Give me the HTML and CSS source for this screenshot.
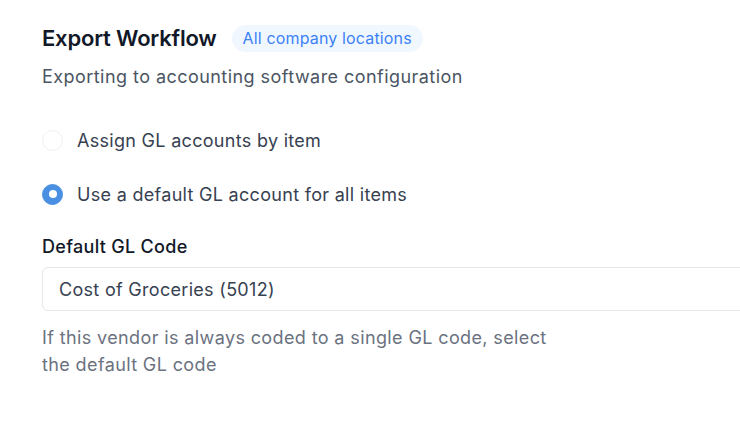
FILE: index.html
```html
<!DOCTYPE html>
<html>
<head>
<meta charset="utf-8">
<link rel="stylesheet" href="styles.css">
</head>
<body>
<div class="page">
  <div class="header">
    <h1 class="title">Export Workflow</h1>
    <span class="badge">All company locations</span>
  </div>
  <p class="subtitle">Exporting to accounting software configuration</p>
  <div class="options">
    <label class="option">
      <span class="radio"></span>
      <span class="option-label">Assign GL accounts by item</span>
    </label>
    <label class="option">
      <span class="radio checked"></span>
      <span class="option-label">Use a default GL account for all items</span>
    </label>
  </div>
  <div class="field">
    <div class="field-label">Default GL Code</div>
    <div class="input">Cost of Groceries (5012)</div>
    <p class="help">If this vendor is always coded to a single GL code, select the default GL code</p>
  </div>
</div>
</body>
</html>
```
FILE: styles.css
```css
html, body {
  margin: 0;
  padding: 0;
  background: #ffffff;
  overflow: hidden;
}
body {
  font-family: Inter, "Noto Sans", sans-serif;
  width: 740px;
  height: 422px;
}
.page {
  padding: 24px 0 0 42px;
  width: 820px;
}
.header {
  display: flex;
  align-items: center;
  gap: 15px;
  height: 28px;
}
.title {
  margin: 0;
  font-size: 22px;
  font-weight: 600;
  letter-spacing: -0.2px;
  color: #111827;
  line-height: 28px;
}
.badge {
  background: #f0f7ff;
  color: #3b82f6;
  font-size: 16px;
  line-height: 27px;
  padding: 0 11px;
  border-radius: 14px;
  letter-spacing: 0.15px;
}
.subtitle {
  margin: 12px 0 0;
  font-size: 18px;
  line-height: 26px;
  letter-spacing: 0.45px;
  color: #4b5563;
}
.options {
  margin-top: 37px;
  display: flex;
  flex-direction: column;
  gap: 28px;
}
.option {
  display: flex;
  align-items: center;
  gap: 14px;
  height: 26px;
}
.radio {
  width: 19px;
  height: 19px;
  border: 1px solid #eef0f2;
  border-radius: 50%;
  box-sizing: content-box;
  flex: none;
  display: flex;
  align-items: center;
  justify-content: center;
}
.radio.checked {
  background: #4a90e2;
  border-color: #4a90e2;
}
.radio.checked::after {
  content: "";
  width: 8px;
  height: 8px;
  border-radius: 50%;
  background: #ffffff;
}
.option-label {
  font-size: 18px;
  letter-spacing: 0.3px;
  color: #374151;
}
.field {
  margin-top: 27px;
}
.field-label {
  font-size: 18px;
  font-weight: 500;
  letter-spacing: 0.3px;
  color: #111827;
  line-height: 26px;
}
.input {
  margin-top: 7px;
  height: 44px;
  box-sizing: border-box;
  border: 1px solid #e5e7eb;
  border-radius: 6px;
  padding: 0 16px;
  display: flex;
  align-items: center;
  font-size: 18px;
  letter-spacing: 0.3px;
  color: #374151;
}
.help {
  margin: 13px 0 0;
  width: 518px;
  font-size: 18px;
  line-height: 27px;
  letter-spacing: 0.38px;
  color: #6b7280;
}
```
